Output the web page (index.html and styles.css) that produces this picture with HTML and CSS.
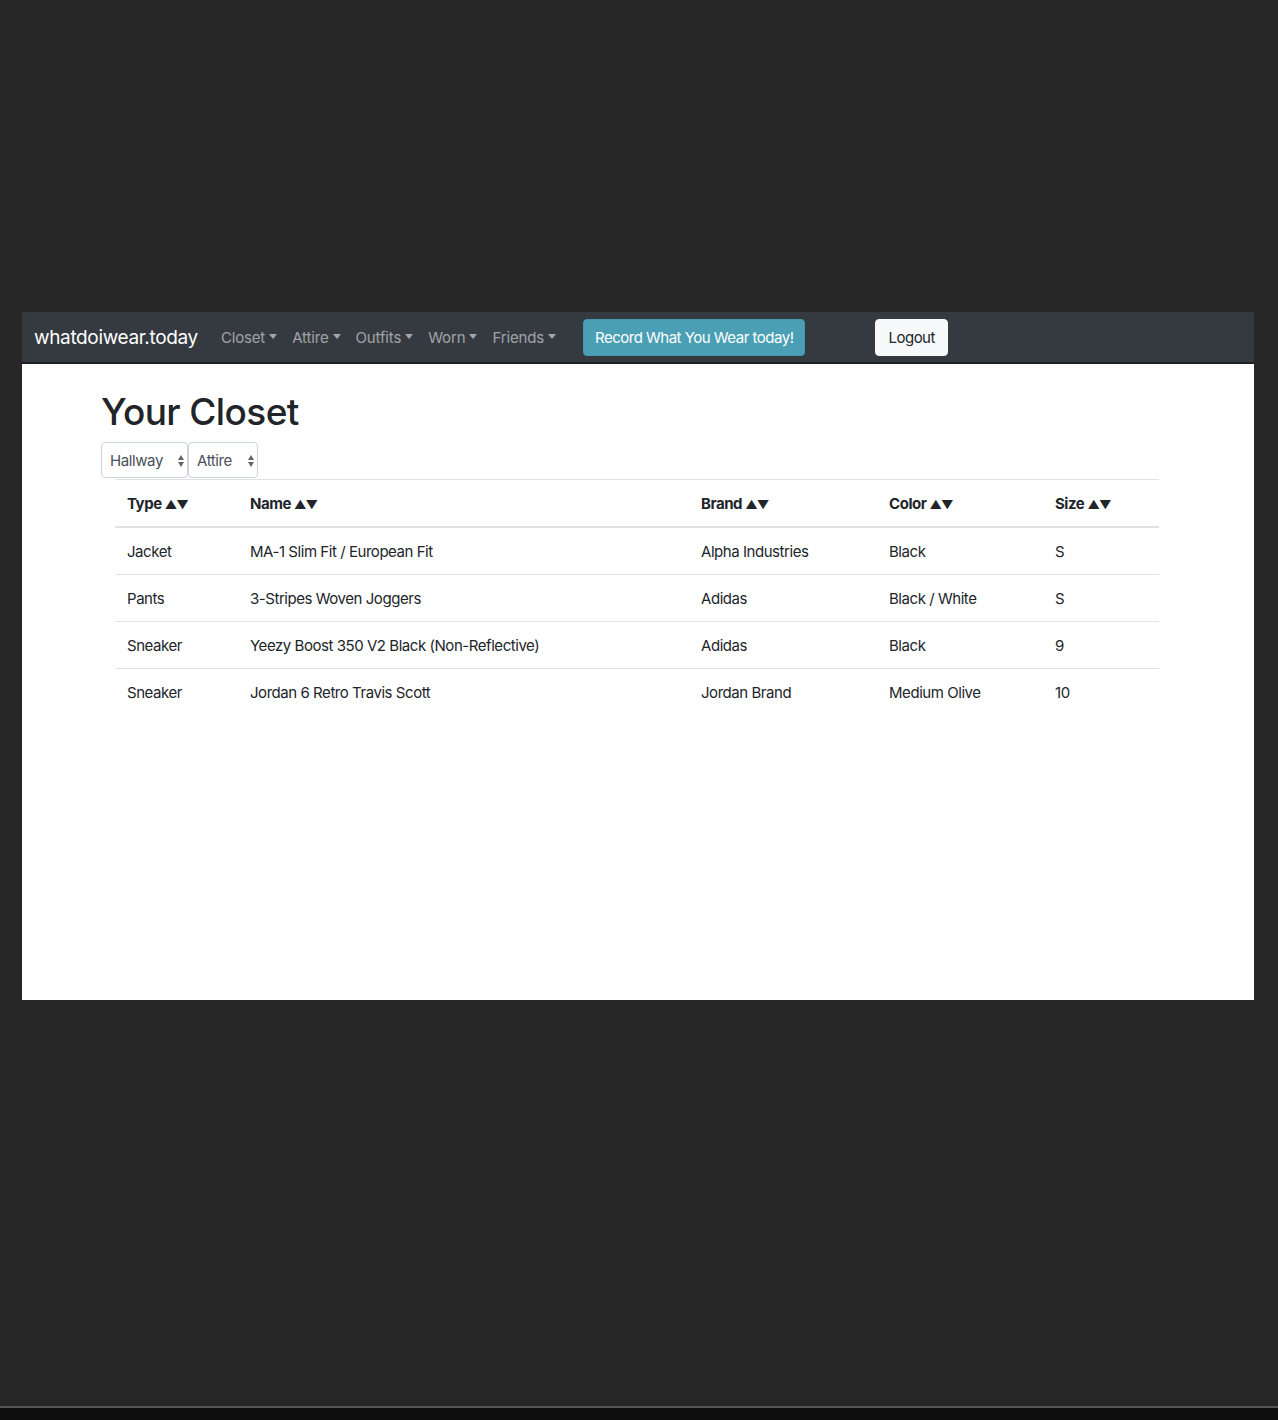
FILE: index.html
```html
<!DOCTYPE html>
<html>
<head>
<meta charset="utf-8">
<title>whatdoiwear.today</title>
<link rel="stylesheet" href="styles.css">
</head>
<body>
<div class="stage">
  <div class="window">
    <nav class="navbar">
      <a class="brand" href="#">whatdoiwear.today</a>
      <ul class="nav">
        <li class="nav-link">Closet<span class="caret"></span></li>
        <li class="nav-link">Attire<span class="caret"></span></li>
        <li class="nav-link">Outfits<span class="caret"></span></li>
        <li class="nav-link">Worn<span class="caret"></span></li>
        <li class="nav-link">Friends<span class="caret"></span></li>
      </ul>
      <button class="btn btn-info">Record What You Wear today!</button>
      <button class="btn btn-light">Logout</button>
    </nav>
    <main class="content">
      <h1 class="title">Your Closet</h1>
      <div class="filters">
        <div class="select select-hallway">Hallway<span class="updown"><span class="up"></span><span class="down"></span></span></div>
        <div class="select select-attire">Attire<span class="updown"><span class="up"></span><span class="down"></span></span></div>
      </div>
      <table class="table">
        <colgroup>
          <col class="c-type"><col class="c-name"><col class="c-brand"><col class="c-color"><col class="c-size">
        </colgroup>
        <thead>
          <tr><th>Type <span class="sort">▲▼</span></th><th>Name <span class="sort">▲▼</span></th><th>Brand <span class="sort">▲▼</span></th><th>Color <span class="sort">▲▼</span></th><th>Size <span class="sort">▲▼</span></th></tr>
        </thead>
        <tbody>
          <tr><td>Jacket</td><td>MA-1 Slim Fit / European Fit</td><td>Alpha Industries</td><td>Black</td><td>S</td></tr>
          <tr><td>Pants</td><td>3-Stripes Woven Joggers</td><td>Adidas</td><td>Black / White</td><td>S</td></tr>
          <tr><td>Sneaker</td><td>Yeezy Boost 350 V2 Black (Non-Reflective)</td><td>Adidas</td><td>Black</td><td>9</td></tr>
          <tr><td>Sneaker</td><td>Jordan 6 Retro Travis Scott</td><td>Jordan Brand</td><td>Medium Olive</td><td>10</td></tr>
        </tbody>
      </table>
    </main>
  </div>
</div>
<div class="bottom-bar"></div>
</body>
</html>
```

FILE: styles.css
```css
html, body {
  margin: 0;
  padding: 0;
  background: #272727;
  height: 100%;
}
body {
  font-family: Inter, "Liberation Sans", sans-serif;
  color: #212529;
  position: relative;
  min-height: 1420px;
}
.stage {
  padding: 312px 24px 0 22px;
}
.window {
  width: 1232px;
  background: #ffffff;
}
.navbar {
  height: 50px;
  background: #343a40;
  border-bottom: 2px solid #1d2024;
  display: flex;
  align-items: center;
  padding: 0 12px;
  box-sizing: content-box;
}
.brand {
  color: #ffffff;
  text-decoration: none;
  font-size: 19px;
  letter-spacing: -0.35px;
  margin-right: 16px;
}
.nav {
  list-style: none;
  display: flex;
  margin: 0;
  padding: 0;
  margin-right: 19px;
}
.nav-link {
  color: rgba(255,255,255,0.55);
  font-size: 15px;
  letter-spacing: -0.15px;
  padding: 0 7px;
  margin-right: 1px;
  display: flex;
  align-items: center;
}
.caret {
  display: inline-block;
  margin-left: 4px;
  border-top: 5px solid rgba(255,255,255,0.55);
  border-left: 4.5px solid transparent;
  border-right: 4.5px solid transparent;
  margin-top: -2px;
}
.btn {
  font-family: inherit;
  font-size: 15px;
  letter-spacing: -0.5px;
  height: 37px;
  border-radius: 4px;
  padding: 0 11px;
  cursor: pointer;
}
.btn-info {
  background: #4a9fb5;
  border: 1px solid #4599ae;
  color: #ffffff;
}
.btn-light {
  margin-left: 70px;
  padding: 0 12px;
  background: #f8f9fa;
  border: 1px solid #f8f9fa;
  color: #212529;
}
.content {
  height: 636px;
  padding: 0 0 0 79px;
}
.title {
  margin: 0;
  padding-top: 25px;
  font-size: 37px;
  font-weight: 500;
  line-height: 46px;
  letter-spacing: -0.6px;
}
.filters {
  display: flex;
  gap: 0;
  margin-top: 7px;
}
.select {
  height: 36px;
  box-sizing: border-box;
  border: 1px solid #ced4da;
  border-radius: 4px;
  display: flex;
  align-items: center;
  padding-left: 8px;
  font-size: 15px;
  letter-spacing: -0.4px;
  color: #495057;
  position: relative;
}
.select-hallway { width: 87px; }
.select-attire { width: 70px; }
.updown {
  position: absolute;
  right: 3px;
  top: 12px;
  display: flex;
  flex-direction: column;
  gap: 2px;
}
.up {
  border-bottom: 5px solid #666;
  border-left: 3.5px solid transparent;
  border-right: 3.5px solid transparent;
}
.down {
  border-top: 5px solid #666;
  border-left: 3.5px solid transparent;
  border-right: 3.5px solid transparent;
}
.table {
  margin-left: 14px;
  margin-top: 1px;
  width: 1044px;
  border-collapse: collapse;
  table-layout: fixed;
  font-size: 15px;
  letter-spacing: -0.45px;
}
.c-type { width: 123px; }
.c-name { width: 451px; }
.c-brand { width: 188px; }
.c-color { width: 166px; }
.c-size { width: 116px; }
.table th, .table td {
  text-align: left;
  padding: 12px 12px 11px;
  line-height: 23px;
  border-top: 1px solid #dee2e6;
}
.table th {
  font-weight: 700;
  padding: 12px 12px 10px;
  border-bottom: 2px solid #dee2e6;
}
.sort {
  font-size: 12px;
  letter-spacing: -1px;
}
.bottom-bar {
  position: absolute;
  left: 0;
  right: 0;
  top: 1406px;
  height: 14px;
  background: #0e0e0e;
  border-top: 2px solid #555555;
  box-sizing: border-box;
}
```
